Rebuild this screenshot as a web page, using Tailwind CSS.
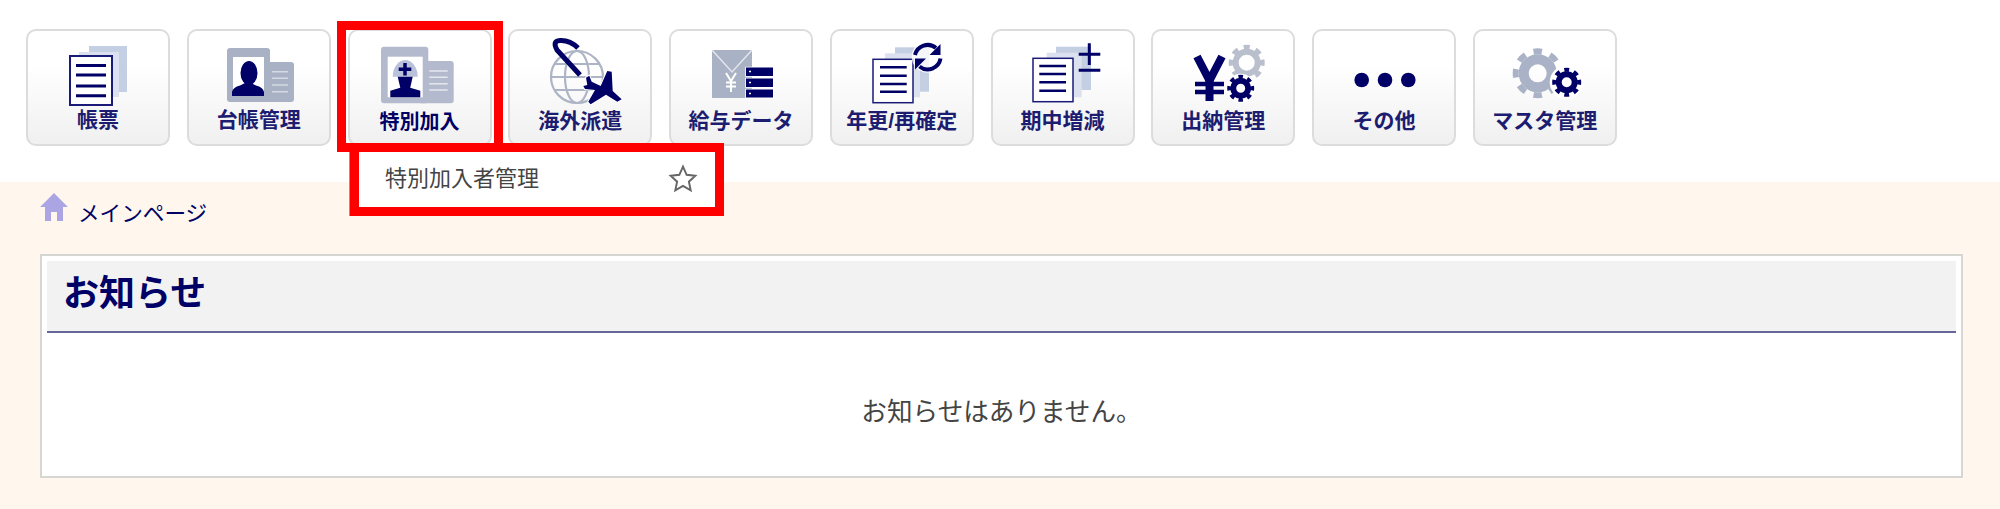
<!doctype html>
<html lang="ja">
<head>
<meta charset="utf-8">
<title>メインページ</title>
<script src="https://cdn.jsdelivr.net/npm/@tailwindcss/browser@4"></script>
</head>
<body class="bg-white font-['Liberation_Sans','Noto_Sans_CJK_JP',sans-serif]">
<div class="relative h-[509px] w-[2000px] overflow-hidden">

  <!-- menu buttons -->
  <nav class="flex h-[182px] items-start gap-[16.75px] pl-[26px] pt-[29px]">
    <a class="flex h-[117px] w-[144px] flex-col items-center rounded-[10px] border-2 border-[#dcdcdc] bg-gradient-to-b from-white from-30% to-[#f0f0f0] pt-1">
      <svg class="shrink-0" width="140" height="72" viewBox="2 0 140 72">
        <rect x="63" y="11" width="38" height="46" fill="#c5cfe3"/>
        <rect x="53" y="17" width="40" height="45" fill="#dbe1ee"/>
        <rect x="44" y="21" width="42" height="49" fill="#fff" stroke="#1a1a78" stroke-width="2"/>
        <path d="M50 30.500h30M50 40h30M50 51h30M50 60.700h30" stroke="#000066" stroke-width="3"/>
      </svg>
      <span class="mt-[1px] text-[21px] leading-[24px] font-bold text-[#1c1c70]">帳票</span>
    </a>
    <a class="flex h-[117px] w-[144px] flex-col items-center rounded-[10px] border-2 border-[#dcdcdc] bg-gradient-to-b from-white from-30% to-[#f0f0f0] pt-1">
      <svg class="shrink-0" width="140" height="72" viewBox="2 0 140 72">
        <rect x="40" y="13" width="43" height="54" rx="3" fill="#a9b1c4"/>
        <rect x="70" y="27" width="37" height="40" rx="3" fill="#a9b1c4"/>
        <rect x="46" y="22" width="31" height="39" fill="#fff"/>
        <ellipse cx="62" cy="38" rx="8.500" ry="12" fill="#000066"/>
        <path d="M45 61v-4q1-5 8-6.500l5-2.500h6l5 2.500q7 1.500 8 6.500v4z" fill="#000066"/>
        <path d="M85 36.700h16M85 43.300h16M85 50h16M85 56.700h16" stroke="#d5d9e3" stroke-width="1.500"/>
      </svg>
      <span class="mt-[1px] text-[21px] leading-[24px] font-bold text-[#1c1c70]">台帳管理</span>
    </a>
    <a class="flex h-[117px] w-[144px] flex-col items-center rounded-[10px] border-2 border-[#dcdcdc] bg-gradient-to-b from-white from-30% to-[#f0f0f0] pt-1">
      <svg class="shrink-0" width="140" height="72" viewBox="2 0 140 72">
        <rect x="33" y="11.700" width="47.300" height="56.600" rx="3" fill="#b3bacd"/>
        <rect x="70" y="26" width="35.700" height="42.300" rx="3" fill="#b3bacd"/>
        <rect x="39.700" y="21.700" width="35" height="40.600" fill="#fff"/>
        <path d="M44.700 41.700a12.500 16.700 0 0 1 25 0z" fill="#b9c2d8"/>
        <path d="M57 28v12.500M50.700 34.300h12.600" stroke="#000066" stroke-width="3.500"/>
        <path d="M49.700 41.700h15l-2.500 11 10.100 3v6.600h-30v-6.600l10-3z" fill="#000066"/>
        <path d="M81.300 36h18.400M81.300 42.300h18.400M81.300 48.700h18.400M81.300 55h18.400" stroke="#e4e7ee" stroke-width="1.500"/>
      </svg>
      <span class="mt-[3px] text-[20px] leading-[24px] font-bold text-[#000066]">特別加入</span>
    </a>
    <a class="flex h-[117px] w-[144px] flex-col items-center rounded-[10px] border-2 border-[#dcdcdc] bg-gradient-to-b from-white from-30% to-[#f0f0f0] pt-1">
      <svg class="shrink-0" width="140" height="72" viewBox="2 0 140 72">
        <g fill="none" stroke="#adb4c5" stroke-width="2.200">
          <circle cx="69" cy="42" r="26"/>
          <ellipse cx="69" cy="42" rx="12" ry="26"/>
          <path d="M43 42h52M47 29h44M47 55h44"/>
        </g>
        <path d="M72 40L49 15Q44 6 52 5.500Q62 5 70 13" fill="none" stroke="#000066" stroke-width="5"/>
        <path d="M113.700 64.300L104.700 56 103.700 36.700 99.300 36 92.700 51 83.700 46.700 81.300 40.700 78 42.700 79.300 50 75.300 51 77 54 87 55 80.300 66.700 82.700 69.300 98 59.700 109.300 66.700z" fill="#000066" stroke="#fff" stroke-width="2" paint-order="stroke"/>
      </svg>
      <span class="mt-[2px] text-[21px] leading-[24px] font-bold text-[#1c1c70]">海外派遣</span>
    </a>
    <a class="flex h-[117px] w-[144px] flex-col items-center rounded-[10px] border-2 border-[#dcdcdc] bg-gradient-to-b from-white from-30% to-[#f0f0f0] pt-1">
      <svg class="shrink-0" width="140" height="72" viewBox="2 0 140 72">
        <rect x="43" y="15" width="40" height="48" fill="#a9b1c4"/>
        <path d="M43 15l20 22 20-22" fill="none" stroke="#e3e6ec" stroke-width="1.500"/>
        <path d="M57 38l5 8 5-8M62 46v11M57 47.500h10M57 51.500h10" fill="none" stroke="#fff" stroke-width="2"/>
        <g fill="#000066" stroke="#fff" stroke-width="1.500" paint-order="stroke">
          <rect x="77" y="32.500" width="27" height="8.500"/>
          <rect x="77" y="43.500" width="27" height="8.500"/>
          <rect x="77" y="54.500" width="27" height="8"/>
        </g>
        <path d="M80 36.500h2M80 47.500h2M80 58.500h2" stroke="#fff" stroke-width="1.500"/>
      </svg>
      <span class="mt-[2px] text-[21px] leading-[24px] font-bold text-[#1c1c70]">給与データ</span>
    </a>
    <a class="flex h-[117px] w-[144px] flex-col items-center rounded-[10px] border-2 border-[#dcdcdc] bg-gradient-to-b from-white from-30% to-[#f0f0f0] pt-1">
      <svg class="shrink-0" width="140" height="72" viewBox="2 0 140 72">
        <rect x="65" y="12.300" width="34" height="44.400" fill="#c5cfe3"/>
        <rect x="55" y="18.300" width="35" height="44" fill="#dbe1ee"/>
        <rect x="43" y="24.300" width="40" height="43.400" fill="#fff" stroke="#1a1a78" stroke-width="1.500"/>
        <path d="M50 32.300h26.700M50 40.700h26.700M50 49h26.700M50 56.700h26.700" stroke="#000066" stroke-width="2.500"/>
        <circle cx="97.700" cy="21.700" r="16" fill="#fff" opacity=".8"/>
        <path d="M85 20a13 13 0 0 1 21-7M110.500 23.500a13 13 0 0 1-21 8" fill="none" stroke="#000066" stroke-width="4"/>
        <path d="M110.500 9v11h-11zM85 34.500v-11h11z" fill="#000066"/>
      </svg>
      <span class="mt-[2px] text-[21px] leading-[24px] font-bold text-[#1c1c70]">年更/再確定</span>
    </a>
    <a class="flex h-[117px] w-[144px] flex-col items-center rounded-[10px] border-2 border-[#dcdcdc] bg-gradient-to-b from-white from-30% to-[#f0f0f0] pt-1">
      <svg class="shrink-0" width="140" height="72" viewBox="2 0 140 72">
        <rect x="65" y="11.700" width="35" height="43.300" fill="#c5cfe3"/>
        <rect x="55.700" y="17.700" width="35" height="44.600" fill="#dbe1ee"/>
        <rect x="42" y="23.300" width="40" height="43.400" fill="#fff" stroke="#1a1a78" stroke-width="1.500"/>
        <path d="M48.300 31h26.700M48.300 39h26.700M48.300 47.300h26.700M48.300 55.700h26.700" stroke="#000066" stroke-width="2.500"/>
        <path d="M87.700 19.300h21.600M98.300 8.300v21.700M87.700 35.300h21.600" stroke="#000066" stroke-width="3"/>
      </svg>
      <span class="mt-[2px] text-[21px] leading-[24px] font-bold text-[#1c1c70]">期中増減</span>
    </a>
    <a class="flex h-[117px] w-[144px] flex-col items-center rounded-[10px] border-2 border-[#dcdcdc] bg-gradient-to-b from-white from-30% to-[#f0f0f0] pt-1">
      <svg class="shrink-0" width="140" height="72" viewBox="2 0 140 72">
        <path d="M46 21.500l12.500 24L71 21.500" fill="none" stroke="#000066" stroke-width="8"/>
        <path d="M58.500 44v22" stroke="#000066" stroke-width="8"/>
        <path d="M44 49h29M44 57h29" stroke="#000066" stroke-width="4.500"/>
        <circle cx="95.700" cy="27.700" r="11" fill="none" stroke="#b9bfcc" stroke-width="6"/>
        <circle cx="95.700" cy="27.700" r="15.500" fill="none" stroke="#b9bfcc" stroke-width="5" pathLength="64" stroke-dasharray="4 4" stroke-dashoffset="2"/>
        <circle cx="89.700" cy="53.300" r="14.500" fill="#fff"/>
        <circle cx="89.700" cy="53.300" r="7.500" fill="none" stroke="#000066" stroke-width="6"/>
        <circle cx="89.700" cy="53.300" r="11.500" fill="none" stroke="#000066" stroke-width="4" pathLength="64" stroke-dasharray="4 4" stroke-dashoffset="2"/>
      </svg>
      <span class="mt-[2px] text-[21px] leading-[24px] font-bold text-[#1c1c70]">出納管理</span>
    </a>
    <a class="flex h-[117px] w-[144px] flex-col items-center rounded-[10px] border-2 border-[#dcdcdc] bg-gradient-to-b from-white from-30% to-[#f0f0f0] pt-1">
      <svg class="shrink-0" width="140" height="72" viewBox="2 0 140 72">
        <circle cx="49.700" cy="45" r="7.300" fill="#000066"/>
        <circle cx="73" cy="45" r="7.300" fill="#000066"/>
        <circle cx="96.300" cy="45" r="7.300" fill="#000066"/>
      </svg>
      <span class="mt-[2px] text-[21px] leading-[24px] font-bold text-[#1c1c70]">その他</span>
    </a>
    <a class="flex h-[117px] w-[144px] flex-col items-center rounded-[10px] border-2 border-[#dcdcdc] bg-gradient-to-b from-white from-30% to-[#f0f0f0] pt-1">
      <svg class="shrink-0" width="140" height="72" viewBox="2 0 140 72">
        <circle cx="64.700" cy="38.300" r="14" fill="none" stroke="#a9b2c6" stroke-width="10"/>
        <circle cx="64.700" cy="38.300" r="22" fill="none" stroke="#a9b2c6" stroke-width="6" pathLength="64" stroke-dasharray="4 4" stroke-dashoffset="2"/>
        <circle cx="93.700" cy="47.300" r="17" fill="#fff"/>
        <circle cx="93.700" cy="47.300" r="8" fill="none" stroke="#000066" stroke-width="6"/>
        <circle cx="93.700" cy="47.300" r="12.500" fill="none" stroke="#000066" stroke-width="4" pathLength="64" stroke-dasharray="4 4" stroke-dashoffset="2"/>
      </svg>
      <span class="mt-[2px] text-[21px] leading-[24px] font-bold text-[#1c1c70]">マスタ管理</span>
    </a>
  </nav>

  <!-- main area -->
  <main class="h-[327px] bg-[#fff7ee] pl-[40px] pt-[11px]">
    <div class="flex h-[36px] items-start gap-[10px]">
      <svg width="28" height="28" viewBox="0 0 28 28">
        <path d="M14 0L28 14h-5v14h-6v-9h-6v9H5V14H0z" fill="#aba6e3"/>
      </svg>
      <a class="mt-[6px] text-[21.600px] leading-[30px] text-[#000066]">メインページ</a>
    </div>
    <section class="mt-[25px] h-[224px] w-[1923px] border-2 border-[#d6d6d2] bg-white px-[5px] pt-[5px]">
      <h2 class="h-[72px] border-b-2 border-[#666699] bg-[#f2f2f2] pl-[16px] text-[36px] leading-[66px] font-bold text-[#000066]">お知らせ</h2>
      <p class="pt-[61px] text-center text-[25.600px] leading-[36px] text-[#444]">お知らせはありません。</p>
    </section>
  </main>

  <!-- dropdown -->
  <div class="absolute left-[349px] top-[143px] flex h-[73px] w-[375px] items-center justify-between border-l border-[#999] bg-white pb-[2px] pl-[35px] pr-[26px]">
    <span class="text-[22px] text-[#444]">特別加入者管理</span>
    <svg width="30" height="30" viewBox="0 0 28 28">
      <path d="M14 2.500l3.400 7.600 8.100.9-6 5.500 1.700 8.100L14 20.500l-7.200 4.100 1.700-8.100-6-5.500 8.100-.9z" fill="none" stroke="#666" stroke-width="1.800"/>
    </svg>
  </div>

  <!-- red highlight frames -->
  <div class="absolute left-[337px] top-[21px] h-[131px] w-[166px] border-[9px] border-[#ff0000]"></div>
  <div class="absolute left-[350px] top-[143px] h-[73px] w-[374px] border-[9px] border-[#ff0000]"></div>
</div>
</body>
</html>
